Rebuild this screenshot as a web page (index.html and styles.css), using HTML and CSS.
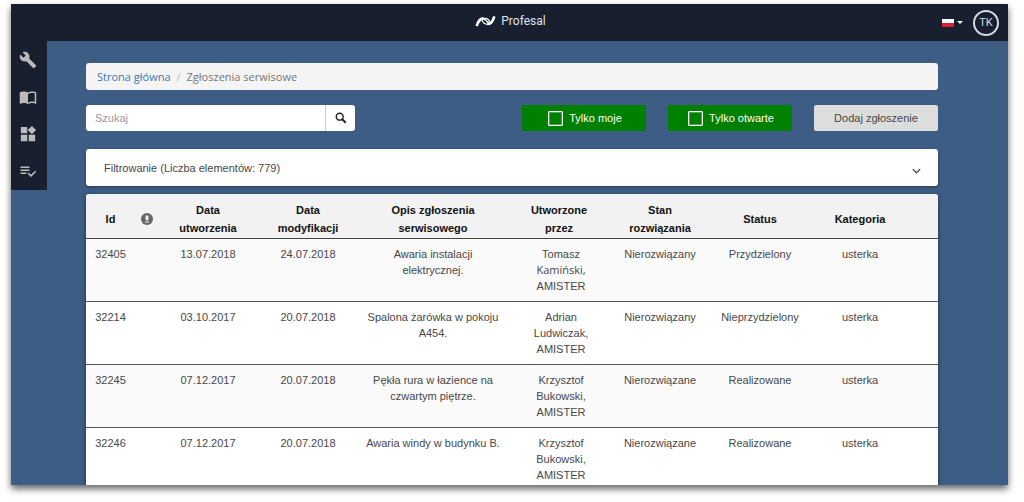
FILE: index.html
```
<!DOCTYPE html>
<html lang="pl">
<head>
<meta charset="utf-8">
<title>Profesal – Zgłoszenia serwisowe</title>
<link rel="stylesheet" href="styles.css">
</head>
<body>
<div class="window">
  <header class="topbar">
    <div class="brand">
      <svg class="brand-mark" viewBox="0 0 22 14" aria-hidden="true"><g fill="none" stroke="#fff"><path d="M1.500 12C3 7 6 3.500 9 4" stroke-width="2.800"/><path d="M20.500 1.500C19 7 16 10 13 9.500" stroke-width="2.800"/><path d="M7 3.500C10 3.500 11 5 15 9.500" stroke-width="1.500"/><path d="M7.500 4.500C7 8 10 10 14 10" stroke-width="1.300"/><path d="M8 4C12 3 15 4 15.500 8" stroke-width="1.300"/></g></svg>
      <span>Profesal</span>
    </div>
    <div class="account">
      <button class="language" type="button" aria-label="Język: polski"><span class="flag"></span><span class="caret"></span></button>
      <button class="avatar" type="button">TK</button>
    </div>
  </header>
  <div class="body">
    <nav class="sidebar" aria-label="Menu">
      <a href="#" aria-label="Serwis"><svg viewBox="0 0 24 24"><path d="M22.700 19l-9.100-9.100c.9-2.300.4-5-1.500-6.900-2-2-5-2.400-7.400-1.300L9 6 6 9 1.600 4.700C.4 7.100.9 10.100 2.900 12.100c1.900 1.900 4.600 2.400 6.900 1.500l9.100 9.100c.4.400 1 .4 1.400 0l2.300-2.300c.5-.4.5-1.100.1-1.400z"/></svg></a>
      <a href="#" aria-label="Katalog"><svg viewBox="0 0 24 24"><path d="M21 5c-1.110-.35-2.330-.5-3.500-.5-1.950 0-4.050.4-5.500 1.500-1.450-1.100-3.550-1.500-5.500-1.500S2.450 4.900 1 6v14.650c0 .25.25.5.5.5.1 0 .15-.05.25-.05C3.100 20.450 5.050 20 6.500 20c1.950 0 4.050.4 5.500 1.500 1.350-.85 3.800-1.500 5.500-1.500 1.650 0 3.350.3 4.750 1.050.1.050.15.050.25.050.25 0 .5-.25.5-.5V6c-.6-.45-1.250-.75-2-1zm0 13.500c-1.100-.35-2.300-.5-3.500-.5-1.700 0-4.150.65-5.500 1.500V8c1.350-.85 3.800-1.500 5.500-1.500 1.200 0 2.400.15 3.500.5v11.500z"/></svg></a>
      <a href="#" aria-label="Moduły"><svg viewBox="0 0 24 24"><path d="M13 13h8.500v8.500H13zM2.500 13H11v8.500H2.500zM2.500 2.500H11V11H2.500zM17.200 1.200l5.600 5.600-5.600 5.600-5.600-5.600z"/></svg></a>
      <a href="#" aria-label="Zadania"><svg viewBox="0 0 24 24"><path d="M14 10H2v2h12v-2zm0-4H2v2h12V6zM2 16h8v-2H2v2zm19.500-4.500L23 13l-6.990 7-4.510-4.500L13 14l3.010 3 5.490-5.500z"/></svg></a>
    </nav>
    <main class="content">
      <nav class="breadcrumb" aria-label="Ścieżka">
        <a href="#">Strona główna</a><span class="separator">/</span><span>Zgłoszenia serwisowe</span>
      </nav>
      <div class="toolbar">
        <form class="search">
          <input type="text" placeholder="Szukaj" aria-label="Szukaj">
          <button type="button" aria-label="Wyszukaj"><svg viewBox="0 0 14 14"><circle cx="5.500" cy="5.500" r="4" fill="none" stroke="#222" stroke-width="1.700"/><path d="M8.500 8.500l4 4" stroke="#222" stroke-width="2.400"/></svg></button>
        </form>
        <div class="actions">
          <label class="toggle"><input type="checkbox"><span>Tylko moje</span></label>
          <label class="toggle"><input type="checkbox"><span>Tylko otwarte</span></label>
          <button class="add" type="button">Dodaj zgłoszenie</button>
        </div>
      </div>
      <button class="filter" type="button">
        <span>Filtrowanie (Liczba elementów: 779)</span>
        <svg viewBox="0 0 10 6" aria-hidden="true"><path d="M1 1l4 4 4-4" fill="none" stroke="#555" stroke-width="1.600"/></svg>
      </button>
      <table class="tickets">
        <colgroup><col class="c-id"><col class="c-flag"><col class="c-created"><col class="c-modified"><col class="c-desc"><col class="c-author"><col class="c-state"><col class="c-status"><col class="c-category"><col class="c-end"></colgroup>
        <thead>
          <tr><th>Id</th><th><svg class="alert" viewBox="0 0 12 12" role="img" aria-label="Priorytet"><circle cx="6" cy="6" r="6" fill="#666"/><path d="M4.500 2.500h3v3.500a1.500 1.500 0 0 1-3 0z" fill="#eee"/><path d="M4 9h4" stroke="#eee" stroke-width="1.200"/></svg></th><th>Data utworzenia</th><th>Data modyfikacji</th><th>Opis zgłoszenia serwisowego</th><th>Utworzone przez</th><th>Stan rozwiązania</th><th>Status</th><th>Kategoria</th><th></th></tr>
        </thead>
        <tbody>
          <tr><td>32405</td><td></td><td>13.07.2018</td><td>24.07.2018</td><td>Awaria instalacji<br>elektrycznej.</td><td>Tomasz <span class="surname">Kamiński,</span> AMISTER</td><td>Nierozwiązany</td><td>Przydzielony</td><td>usterka</td><td></td></tr>
          <tr><td>32214</td><td></td><td>03.10.2017</td><td>20.07.2018</td><td>Spalona żarówka w pokoju A454.</td><td>Adrian Ludwiczak, AMISTER</td><td>Nierozwiązany</td><td>Nieprzydzielony</td><td>usterka</td><td></td></tr>
          <tr><td>32245</td><td></td><td>07.12.2017</td><td>20.07.2018</td><td>Pękła rura w łazience na czwartym piętrze.</td><td>Krzysztof Bukowski, AMISTER</td><td>Nierozwiązane</td><td>Realizowane</td><td>usterka</td><td></td></tr>
          <tr><td>32246</td><td></td><td>07.12.2017</td><td>20.07.2018</td><td>Awaria windy w budynku B.</td><td>Krzysztof Bukowski, AMISTER</td><td>Nierozwiązane</td><td>Realizowane</td><td>usterka</td><td></td></tr>
        </tbody>
      </table>
    </main>
  </div>
</div>
</body>
</html>
```
FILE: styles.css
```
* { box-sizing: border-box; }

body {
  margin: 0;
  padding: 4px 16px 17px 11px;
  height: 100vh;
  overflow: hidden;
  background: #fff;
  font-family: "Liberation Sans", Arial, sans-serif;
  font-size: 11px;
  color: #484848;
}

button, input { font: inherit; color: inherit; margin: 0; border: 0; }
button { cursor: pointer; }

.window {
  display: flex;
  flex-direction: column;
  height: 100%;
  overflow: hidden;
  background: #3d5d84;
  box-shadow: 0 4px 7px rgba(0, 0, 0, 0.6);
}

.topbar {
  flex: none;
  display: grid;
  grid-template-columns: 1fr auto 1fr;
  align-items: center;
  height: 37px;
  padding: 0 9px 0 11px;
  background: #181f2e;
}

.brand {
  grid-column: 2;
  display: flex;
  align-items: center;
  gap: 5px;
  color: #dfe3ea;
  font-family: Roboto, sans-serif;
  font-size: 12px;
  font-weight: 400;
  line-height: 16px;
  padding-bottom: 3px;
}
.brand-mark { width: 21px; height: 13px; }

.account {
  display: flex;
  justify-content: flex-end;
  align-items: center;
  gap: 10px;
}
.language {
  display: flex;
  align-items: center;
  gap: 3px;
  padding: 0;
  background: none;
}
.flag {
  width: 12px;
  height: 8px;
  background: linear-gradient(#fff 50%, #dc1f35 50%);
}
.caret {
  border: 3px solid transparent;
  border-top-color: #fff;
  border-bottom: 0;
}
.avatar {
  width: 26px;
  height: 26px;
  padding: 0;
  border: 2px solid #d5d9e2;
  border-radius: 50%;
  background: none;
  color: #d5d9e2;
  font-family: Roboto, sans-serif;
}

.body {
  flex: 1;
  min-height: 0;
  display: flex;
  align-items: flex-start;
}

.sidebar {
  flex: none;
  display: flex;
  flex-direction: column;
  width: 36px;
  padding-bottom: 1px;
  background: #181f2e;
}
.sidebar a {
  display: flex;
  align-items: center;
  justify-content: center;
  height: 37px;
  padding: 1px 2px 0 0;
}
.sidebar svg { width: 18px; height: 18px; fill: #bbb; }

.content {
  flex: 1;
  min-width: 0;
  padding: 22px 70px 0 39px;
}

.breadcrumb {
  display: flex;
  align-items: center;
  gap: 6px;
  height: 27px;
  padding: 0 11px;
  border-radius: 3px;
  background: #f4f4f4;
  color: #777;
  font-family: "Open Sans", sans-serif;
}
.breadcrumb a { color: #4078b5; text-decoration: none; }
.separator { color: #bbb; }

.toolbar {
  display: flex;
  justify-content: space-between;
  height: 26px;
  margin: 15px 0 18px;
}

.search { display: flex; width: 269px; }
.search input {
  flex: 1;
  min-width: 0;
  padding: 0 9px;
  border-radius: 3px 0 0 3px;
  background: #fff;
}
.search input::placeholder { color: #999; opacity: 1; }
.search button {
  display: flex;
  align-items: center;
  justify-content: center;
  width: 30px;
  padding: 0;
  border-left: 1px solid #ccc;
  border-radius: 0 3px 3px 0;
  background: #fff;
}
.search svg { width: 12px; height: 12px; }

.actions { display: flex; gap: 22px; }
.toggle, .add {
  display: flex;
  align-items: center;
  justify-content: center;
  width: 124px;
  border-radius: 2px;
}
.toggle {
  gap: 6px;
  padding-left: 2px;
  background: #008000;
  color: #fff;
  cursor: pointer;
}
.toggle input {
  appearance: none;
  width: 15px;
  height: 15px;
  border: 1px solid #fff;
  border-radius: 1px;
  outline: 1px solid rgba(255, 255, 255, 0.3);
  outline-offset: -2px;
}
.toggle input:checked { background: #fff; box-shadow: inset 0 0 0 3px #008000; }
.add { padding: 0; background: #ddd; }

.filter {
  display: flex;
  align-items: center;
  justify-content: space-between;
  width: 100%;
  height: 37px;
  padding: 0 17px 0 18px;
  border-radius: 3px;
  background: #fff;
  box-shadow: 0 1px 3px rgba(0, 0, 0, 0.4);
}
.filter svg { width: 9px; height: 6px; margin-top: 6px; }

.tickets {
  width: 100%;
  margin-top: 8px;
  table-layout: fixed;
  border-spacing: 0;
  border-radius: 3px 3px 0 0;
  background: #fff;
  box-shadow: 0 1px 4px rgba(0, 0, 0, 0.5);
  text-align: center;
  overflow: hidden;
}
.c-id { width: 49px; }
.c-flag { width: 24px; }
.c-created { width: 98px; }
.c-modified { width: 102px; }
.c-desc { width: 148px; }
.c-author { width: 104px; }
.c-state { width: 98px; }
.c-status { width: 102px; }
.c-category { width: 98px; }
.c-end { width: 29px; }

.tickets th {
  padding: 7px 10px 1px;
  border-bottom: 1px solid #444;
  background: #f2f2f2;
  color: #111;
  line-height: 18px;
}
.tickets th:nth-child(-n+2) { padding-left: 0; padding-right: 0; }
.tickets td {
  height: 63px;
  padding: 7px 9px;
  border-bottom: 1px solid #555;
  line-height: 16px;
  vertical-align: top;
}
.tickets td:first-child { padding-left: 0; padding-right: 0; }
.tickets td:nth-child(5) { padding-left: 7px; padding-right: 7px; }
.tickets td:nth-child(6) { padding-left: 20px; padding-right: 16px; }
.tickets tbody tr:nth-child(odd) { background: #fafafa; }
.surname { font-family: "Open Sans", sans-serif; line-height: 1; }
.alert { display: block; width: 12px; height: 12px; margin: 0 auto; }
```
